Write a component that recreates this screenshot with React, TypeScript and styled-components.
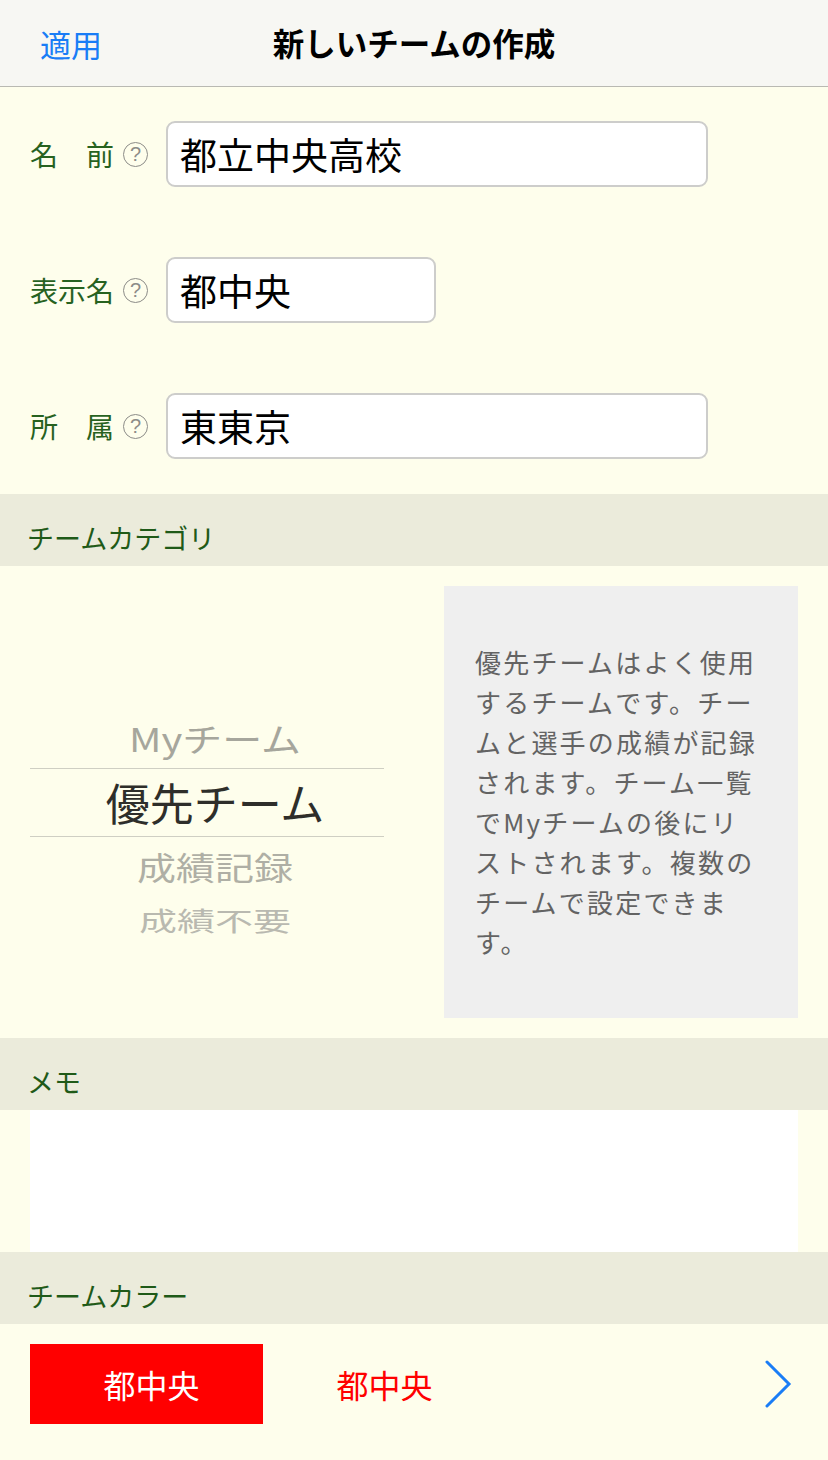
import React from "react";
import styled, { createGlobalStyle } from "styled-components";

const Global = createGlobalStyle`
  html, body { margin: 0; padding: 0; background: #fefeec; }
  body { font-family: "Noto Sans CJK JP", "Noto Sans", sans-serif; }
  * { box-sizing: border-box; }
`;

const Page = styled.div`
  width: 828px;
  min-height: 1460px;
  background: #fefeec;
  display: flex;
  flex-direction: column;
`;

const NavBar = styled.header`
  height: 87px;
  background: #f7f7f3;
  border-bottom: 1px solid #b9b9b2;
  display: grid;
  grid-template-columns: 1fr auto 1fr;
  align-items: center;
  padding: 0 40px;
`;

const NavButton = styled.button`
  justify-self: start;
  background: none;
  border: none;
  padding: 0;
  font-family: inherit;
  font-size: 31px;
  color: #1a7df6;
  line-height: 1;
`;

const NavTitle = styled.h1`
  margin: 0;
  font-size: 31.5px;
  font-weight: 700;
  color: #000;
  line-height: 1;
`;

const Fields = styled.div`
  display: flex;
  flex-direction: column;
  gap: 70px;
  padding: 34px 0 35px 30px;
`;

const FieldRow = styled.div`
  display: flex;
  align-items: center;
  height: 66px;
`;

const Label = styled.span`
  width: 84px;
  font-size: 28px;
  color: #27621f;
  line-height: 1;
  white-space: pre;
`;

const Help = styled.span`
  width: 25px;
  height: 25px;
  margin-left: 9px;
  margin-right: 18px;
  border-radius: 50%;
  border: 1.5px solid #8c8c88;
  color: #8c8c88;
  font-family: "Liberation Sans", sans-serif;
  font-size: 20px;
  display: flex;
  align-items: center;
  justify-content: center;
  line-height: 1;
`;

const TextInput = styled.div<{ $w: number }>`
  width: ${(p) => p.$w}px;
  height: 66px;
  background: #fff;
  border: 2px solid #cdcdcb;
  border-radius: 9px;
  padding-left: 12px;
  display: flex;
  align-items: center;
  font-size: 37px;
  color: #000;
  line-height: 1;
`;

const SectionHead = styled.div`
  height: 72px;
  background: #ebebdb;
  display: flex;
  align-items: flex-end;
  padding: 0 0 13px 27px;
  font-size: 27px;
  line-height: 30px;
  color: #1f5a18;
`;

const CategoryBody = styled.div`
  display: grid;
  grid-template-columns: 354px 354px;
  column-gap: 60px;
  padding: 20px 30px;
`;

const Picker = styled.div`
  display: flex;
  flex-direction: column;
  justify-content: center;
`;

const PickerSlot = styled.div<{ $h: number; $size: number; $color: string; $squash: number; $selected?: boolean }>`
  height: ${(p) => p.$h}px;
  display: flex;
  align-items: center;
  justify-content: center;
  padding-left: 16px;
  font-size: ${(p) => p.$size}px;
  color: ${(p) => p.$color};
  line-height: 1;
  border-top: ${(p) => (p.$selected ? "1px solid #cfcfc3" : "none")};
  border-bottom: ${(p) => (p.$selected ? "1px solid #cfcfc3" : "none")};
  & > span {
    display: inline-block;
    transform: scaleY(${(p) => p.$squash});
  }
`;

const InfoBox = styled.div`
  height: 432px;
  background: #efefef;
  display: flex;
  align-items: center;
  padding: 0 16px 0 31px;
  font-size: 26px;
  letter-spacing: 2.2px;
  line-height: 40px;
  color: #636363;
`;

const MemoBox = styled.div`
  height: 142px;
  margin: 0 30px;
  background: #fff;
`;

const ColorRow = styled.div`
  display: flex;
  align-items: center;
  padding: 20px 35px 0 30px;
  height: 100px;
`;

const Swatch = styled.div<{ $bg: string; $fg: string }>`
  width: 233px;
  height: 80px;
  background: ${(p) => p.$bg};
  color: ${(p) => p.$fg};
  display: flex;
  align-items: center;
  justify-content: center;
  padding-left: 10px;
  font-size: 32px;
  line-height: 1;
`;

const ChevronWrap = styled.div`
  margin-left: auto;
  display: flex;
  align-items: center;
`;

const Spacer = styled.div`
  flex: 1;
`;

const lines = [
  "優先チームはよく使用",
  "するチームです。チー",
  "ムと選手の成績が記録",
  "されます。チーム一覧",
  "でMyチームの後にリ",
  "ストされます。複数の",
  "チームで設定できま",
  "す。",
];

export default function App() {
  return (
    <Page>
      <Global />
      <NavBar>
        <NavButton>適用</NavButton>
        <NavTitle>新しいチームの作成</NavTitle>
        <span />
      </NavBar>

      <Fields>
        <FieldRow>
          <Label>名　前</Label>
          <Help>?</Help>
          <TextInput $w={542}>都立中央高校</TextInput>
        </FieldRow>
        <FieldRow>
          <Label>表示名</Label>
          <Help>?</Help>
          <TextInput $w={270}>都中央</TextInput>
        </FieldRow>
        <FieldRow>
          <Label>所　属</Label>
          <Help>?</Help>
          <TextInput $w={542}>東東京</TextInput>
        </FieldRow>
      </Fields>

      <SectionHead>チームカテゴリ</SectionHead>
      <CategoryBody>
        <Picker>
          <PickerSlot $h={46} $size={30} $color="transparent" $squash={0.7} />
          <PickerSlot $h={60} $size={40} $color="#a6a69c" $squash={0.82}>
            <span>Myチーム</span>
          </PickerSlot>
          <PickerSlot $h={69} $size={44} $color="#2e2e2a" $squash={1} $selected>
            <span>優先チーム</span>
          </PickerSlot>
          <PickerSlot $h={60} $size={39} $color="#afafa5" $squash={0.83}>
            <span>成績記録</span>
          </PickerSlot>
          <PickerSlot $h={46} $size={38} $color="#b9b9b0" $squash={0.7}>
            <span>成績不要</span>
          </PickerSlot>
        </Picker>
        <InfoBox>
          <div>
            {lines.map((l, i) => (
              <React.Fragment key={i}>
                {l}
                {i < lines.length - 1 && <br />}
              </React.Fragment>
            ))}
          </div>
        </InfoBox>
      </CategoryBody>

      <SectionHead>メモ</SectionHead>
      <MemoBox />

      <SectionHead>チームカラー</SectionHead>
      <ColorRow>
        <Swatch $bg="#ff0000" $fg="#fff">都中央</Swatch>
        <Swatch $bg="transparent" $fg="#ff0000">都中央</Swatch>
        <ChevronWrap>
          <svg width="28" height="48" viewBox="0 0 28 48" fill="none">
            <path d="M2 2 L24 24 L2 46" stroke="#1a7df6" strokeWidth="3" strokeLinecap="round" strokeLinejoin="miter" />
          </svg>
        </ChevronWrap>
      </ColorRow>
      <Spacer />
    </Page>
  );
}
